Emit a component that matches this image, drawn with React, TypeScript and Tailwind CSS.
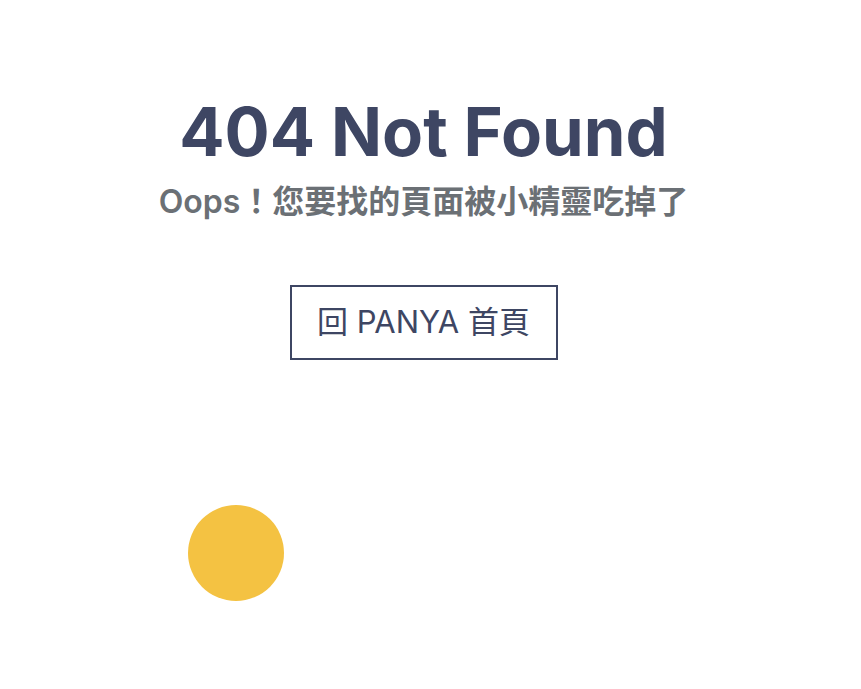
import React from 'react';

const NotFound: React.FC = () => {
  return (
    <div
      className="relative min-h-[689px] w-full bg-white pr-[14px]"
      style={{ fontFamily: 'Inter, "Noto Sans CJK TC", sans-serif' }}
    >
      <div className="flex flex-col items-center pt-[92px]">
        <h1 className="text-[67px] font-bold leading-[80px] text-[#3e4663]">
          404 Not Found
        </h1>
        <p className="mt-[10px] text-[32px] font-semibold leading-[40px] text-[#6b7075]">
          Oops！您要找的頁面被小精靈吃掉了
        </p>
        <a
          href="#"
          className="mt-[63px] flex h-[75px] w-[268px] items-center justify-center border-2 border-[#3e4663] text-[31px] text-[#3e4663]"
        >
          回 PANYA 首頁
        </a>
      </div>
      {/* decorative ball */}
      <div className="absolute left-[188px] top-[505px] h-[96px] w-[96px] rounded-full bg-[#f4c242]" />
    </div>
  );
};

export default function App() {
  return <NotFound />;
}
